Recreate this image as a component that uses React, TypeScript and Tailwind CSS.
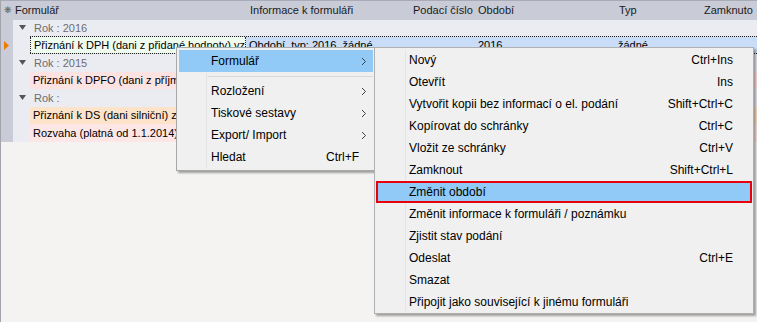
import React from "react";

const menuMain: [string, string][] = [
  ["Nový", "Ctrl+Ins"],
  ["Otevřít", "Ins"],
  ["Vytvořit kopii bez informací o el. podání", "Shift+Ctrl+C"],
  ["Kopírovat do schránky", "Ctrl+C"],
  ["Vložit ze schránky", "Ctrl+V"],
  ["Zamknout", "Shift+Ctrl+L"],
  ["Změnit období", ""],
  ["Změnit informace k formuláři / poznámku", ""],
  ["Zjistit stav podání", ""],
  ["Odeslat", "Ctrl+E"],
  ["Smazat", ""],
  ["Připojit jako související k jinému formuláři", ""],
];

function Chevron() {
  return (
    <svg width="6" height="9" viewBox="0 0 6 9" className="shrink-0">
      <path d="M1 1 L4.5 4.5 L1 8" fill="none" stroke="#404040" strokeWidth="1" />
    </svg>
  );
}

function GroupRow({ label, h }: { label: string; h: string }) {
  return (
    <div className={`flex items-center ${h} pl-[6px] text-[#6e6e6e]`}>
      <svg width="7" height="6" viewBox="0 0 7 6" className="mr-[8px]">
        <polygon points="0,0 7,0 3.5,5" fill="#555" />
      </svg>
      <span>{label}</span>
    </div>
  );
}

function DataRow({ label, bg, h }: { label: string; bg: string; h: string }) {
  return (
    <div className={`flex ${h} ml-[17px] ${bg} items-center`}>
      <span className="w-[216px] pl-[3px] whitespace-nowrap overflow-hidden">{label}</span>
    </div>
  );
}

export default function App() {
  return (
    <div className="relative w-[757px] h-[322px] overflow-hidden bg-[#f4f3f1] border-l border-[#a3a3ab] font-['Liberation_Sans',Arial,sans-serif] text-[11px] text-black">
      {/* header */}
      <div className="flex h-[20px] items-center bg-[#c9ccd7] border-t border-[#a9acb8] text-[#1a1a1a] whitespace-nowrap">
        <span className="w-[13px] pl-[3px] text-[9px] text-[#666] leading-none">❋</span>
        <span className="w-[236px] pl-[1px]">Formulář</span>
        <span className="w-[163px]">Informace k formuláři</span>
        <span className="w-[65px]">Podací číslo</span>
        <span className="w-[141px]">Období</span>
        <span className="w-[85px]">Typ</span>
        <span>Zamknuto</span>
      </div>

      {/* body */}
      <div className="flex h-[122px]">
        <div className="w-[12px] bg-[#c9ccd7] flex flex-col">
          <div className="h-[16px]" />
          <div className="h-[18px] flex items-center pl-[3px]">
            <svg width="6" height="9" viewBox="0 0 6 9">
              <polygon points="0,0 5,4.5 0,9" fill="#f07a00" />
            </svg>
          </div>
        </div>
        <div className="flex-1 bg-[#ebebf2] flex flex-col">
          <GroupRow label="Rok : 2016" h="h-[16px]" />
          <div className="flex h-[18px] ml-[17px] bg-[#c9ddf8] border-y border-dotted border-[#222] items-center whitespace-nowrap">
            <span className="w-[216px] h-full flex items-center pl-[3px] bg-[#effbef] border-x border-dotted border-[#222] overflow-hidden">
              Přiznání k DPH (dani z přidané hodnoty) vz
            </span>
            <span className="w-[228px] pl-[3px]">Období, typ: 2016, žádné</span>
            <span className="w-[141px] pl-[4px]">2016</span>
            <span className="pl-[3px]">žádné</span>
          </div>
          <GroupRow label="Rok : 2015" h="h-[18px]" />
          <DataRow label="Přiznání k DPFO (dani z příjmů fyzických osob)" bg="bg-[#fde2e2]" h="h-[17px]" />
          <GroupRow label="Rok :" h="h-[18px]" />
          <DataRow label="Přiznání k DS (dani silniční) za rok" bg="bg-[#fde3c9]" h="h-[17px]" />
          <DataRow label="Rozvaha (platná od 1.1.2014)" bg="bg-[#fde6e6]" h="h-[18px]" />
        </div>
      </div>

      {/* first context menu */}
      <div className="absolute left-[175px] top-[47px] w-[200px] h-[124px] bg-[#f0f0f0] border border-[#a8a8a8] shadow-[2px_2px_2px_rgba(0,0,0,0.35)] p-[2px] text-[12px]">
        <div className="absolute left-[29px] top-[25px] bottom-[2px] w-px bg-[#e2e2e2]" />
        <div className="relative flex items-center h-[22px] bg-[#91c9f7] pl-[32px] pr-[6px]">
          <span className="flex-1">Formulář</span>
          <Chevron />
        </div>
        <div className="relative h-[8px] flex items-center pl-[29px]">
          <div className="h-px w-full bg-[#d7d7d7]" />
        </div>
        {["Rozložení", "Tiskové sestavy", "Export/ Import"].map((t) => (
          <div key={t} className="relative flex items-center h-[22px] pl-[32px] pr-[6px]">
            <span className="flex-1">{t}</span>
            <Chevron />
          </div>
        ))}
        <div className="relative flex items-center h-[22px] pl-[32px] pr-[14px]">
          <span className="flex-1">Hledat</span>
          <span>Ctrl+F</span>
        </div>
      </div>

      {/* submenu */}
      <div className="absolute left-[373px] top-[47px] w-[380px] h-[267px] bg-[#f0f0f0] border border-[#b0b0b0] shadow-[2px_2px_2px_rgba(0,0,0,0.35)] py-[1px] px-[1px] text-[12px]">
        <div className="absolute left-[30px] top-[2px] bottom-[2px] w-px bg-[#e4e4e4]" />
        {menuMain.map(([label, key]) => {
          const active = label === "Změnit období";
          return (
            <div
              key={label}
              className={`relative flex items-center h-[22px] pr-[19px] whitespace-nowrap ${active ? "bg-[#91c9f7] border-2 border-[#e8000b] pl-[31px]" : "pl-[33px]"}`}
            >
              <span className="flex-1">{label}</span>
              <span>{key}</span>
            </div>
          );
        })}
      </div>
    </div>
  );
}
